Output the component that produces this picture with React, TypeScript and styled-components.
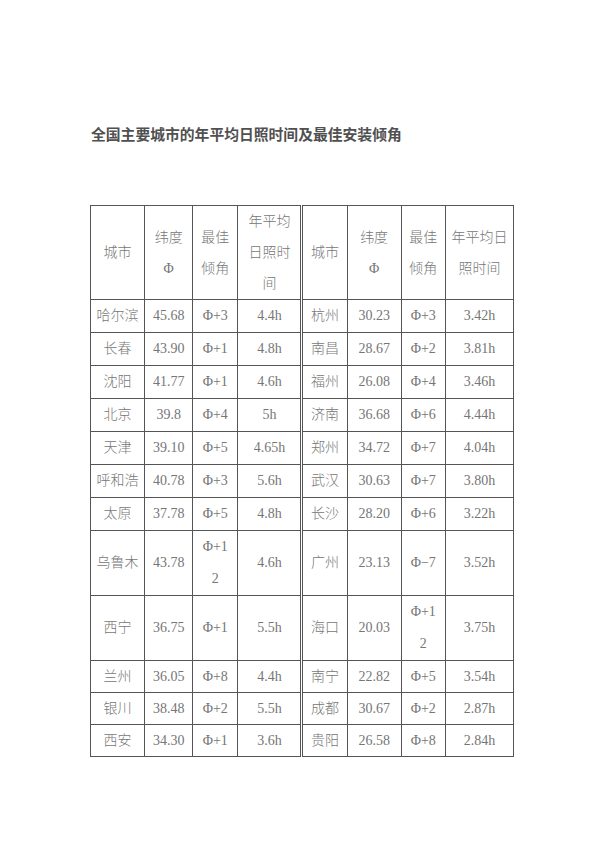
import React from 'react';
import styled, { createGlobalStyle } from 'styled-components';

const GlobalStyle = createGlobalStyle`
  body {
    margin: 0;
    background: #fff;
    font-family: "Liberation Serif", "Noto Sans CJK SC", serif;
  }
`;

type Row = [string, string, string, string];

const leftRows: Row[] = [
  ['哈尔滨', '45.68', 'Φ+3', '4.4h'],
  ['长春', '43.90', 'Φ+1', '4.8h'],
  ['沈阳', '41.77', 'Φ+1', '4.6h'],
  ['北京', '39.8', 'Φ+4', '5h'],
  ['天津', '39.10', 'Φ+5', '4.65h'],
  ['呼和浩', '40.78', 'Φ+3', '5.6h'],
  ['太原', '37.78', 'Φ+5', '4.8h'],
  ['乌鲁木', '43.78', 'Φ+1|2', '4.6h'],
  ['西宁', '36.75', 'Φ+1', '5.5h'],
  ['兰州', '36.05', 'Φ+8', '4.4h'],
  ['银川', '38.48', 'Φ+2', '5.5h'],
  ['西安', '34.30', 'Φ+1', '3.6h'],
];

const rightRows: Row[] = [
  ['杭州', '30.23', 'Φ+3', '3.42h'],
  ['南昌', '28.67', 'Φ+2', '3.81h'],
  ['福州', '26.08', 'Φ+4', '3.46h'],
  ['济南', '36.68', 'Φ+6', '4.44h'],
  ['郑州', '34.72', 'Φ+7', '4.04h'],
  ['武汉', '30.63', 'Φ+7', '3.80h'],
  ['长沙', '28.20', 'Φ+6', '3.22h'],
  ['广州', '23.13', 'Φ−7', '3.52h'],
  ['海口', '20.03', 'Φ+1|2', '3.75h'],
  ['南宁', '22.82', 'Φ+5', '3.54h'],
  ['成都', '30.67', 'Φ+2', '2.87h'],
  ['贵阳', '26.58', 'Φ+8', '2.84h'],
];

const colWidths = [54, 48, 45, 64, 45, 54, 44, 68];

// split on | so cells that wrap in the original keep their breaks
const lines = (text: string) =>
  text.split('|').map((part, i) => (
    <React.Fragment key={i}>
      {i > 0 && <br />}
      {part}
    </React.Fragment>
  ));

const App = () => {
  return (
    <>
      <GlobalStyle />
      <Page>
        <Title>全国主要城市的年平均日照时间及最佳安装倾角</Title>
        <Table>
          <colgroup>
            {colWidths.map((w, i) => (
              <col key={i} style={{ width: w }} />
            ))}
          </colgroup>
          <thead>
            <tr>
              <HeadCell>城市</HeadCell>
              <HeadCell>{lines('纬度|Φ')}</HeadCell>
              <HeadCell>{lines('最佳|倾角')}</HeadCell>
              <HeadCell $divider>{lines('年平均|日照时|间')}</HeadCell>
              <HeadCell>城市</HeadCell>
              <HeadCell>{lines('纬度|Φ')}</HeadCell>
              <HeadCell>{lines('最佳|倾角')}</HeadCell>
              <HeadCell>{lines('年平均日|照时间')}</HeadCell>
            </tr>
          </thead>
          <tbody>
            {leftRows.map((left, r) => {
              const right = rightRows[r];
              const short = r >= 9;
              return (
                <tr key={r}>
                  {left.map((v, c) => (
                    <Cell key={'l' + c} $short={short} $divider={c === 3}>
                      {lines(v)}
                    </Cell>
                  ))}
                  {right.map((v, c) => (
                    <Cell key={'r' + c} $short={short}>
                      {lines(v)}
                    </Cell>
                  ))}
                </tr>
              );
            })}
          </tbody>
        </Table>
      </Page>
    </>
  );
};

export default App;

const Page = styled.div`
  padding: 124px 0 80px 90px;
`;

const Title = styled.h1`
  margin: 0 0 61px 1px;
  font-family: "Noto Sans CJK SC", sans-serif;
  font-size: 14.8px;
  line-height: 20px;
  font-weight: 700;
  color: #505050;
`;

const Table = styled.table`
  border-collapse: collapse;
  table-layout: fixed;
  width: 424px;
  color: #767676;
  font-size: 14px;
  font-weight: 300;
`;

const HeadCell = styled.th<{ $divider?: boolean }>`
  border: 1px solid #555;
  border-right: ${p => (p.$divider ? '3px double #555' : '1px solid #555')};
  padding: 0 4px;
  font-weight: 300;
  line-height: 31px;
  text-align: center;
  vertical-align: middle;
`;

const Cell = styled.td<{ $divider?: boolean; $short?: boolean }>`
  border: 1px solid #555;
  border-right: ${p => (p.$divider ? '3px double #555' : '1px solid #555')};
  padding: 0 2px;
  line-height: ${p => (p.$short ? '31px' : '32px')};
  text-align: center;
  vertical-align: middle;
  white-space: nowrap;
`;
